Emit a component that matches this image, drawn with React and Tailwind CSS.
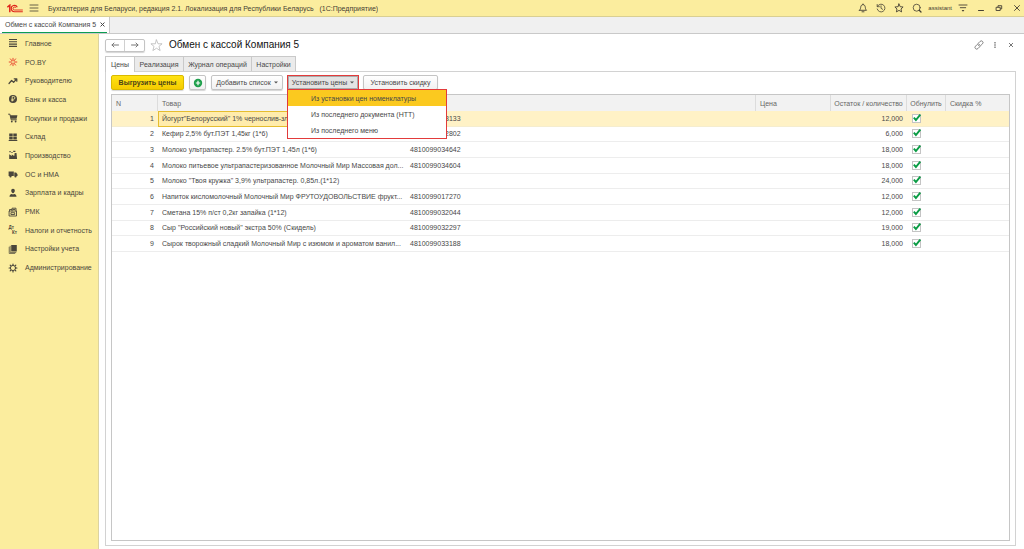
import React, { useState } from "react";

const line = { fill: "none", stroke: "currentColor", strokeWidth: 1, strokeLinecap: "round", strokeLinejoin: "round" };

function Icon({ children, className = "size-[10px]", box = "0 0 10 10" }) {
  return (
    <svg viewBox={box} className={`shrink-0 ${className}`} aria-hidden="true">
      {children}
    </svg>
  );
}

const sections = [
  ["Главное", <path d="M1 1.5h8M1 3.8h8M1 6.1h8M1 8.4h8" {...line} strokeWidth="1.1" strokeLinecap="butt" />],
  ["РО.BY", (
    <g stroke="#e8472e" fill="#e8472e" strokeWidth="1" strokeLinecap="round">
      <path d="M5 1.300v2.300M5 6.400v2.300M1.200 5h2.400M6.400 5h2.400M2.400 1.900l1.700 2M5.900 6.100l1.700 2M7.600 1.900L5.900 3.900M4.100 6.100L2.400 8.100" />
    </g>
  )],
  ["Руководителю", <path d="M1 7.5l2.6-3 2 1.8L8.6 3M6.2 2.8h2.6v2.4" {...line} strokeWidth="1.2" />],
  ["Банк и касса", (
    <g>
      <circle cx="5" cy="5" r="4" fill="currentColor" />
      <path d="M4.2 7.5v-5h1.3a1.4 1.4 0 0 1 0 2.8H3.4M3.4 6.4h2.2" fill="none" stroke="#fbed9e" strokeWidth="0.8" />
    </g>
  )],
  ["Покупки и продажи", (
    <g>
      <path d="M2.2 2.2H9.4L8.6 5.8H3.2z" fill="currentColor" />
      <path d="M.6 1.2h1.3l1.3 5.6h5.2" {...line} />
      <circle cx="3.8" cy="8.5" r=".9" fill="currentColor" />
      <circle cx="7.6" cy="8.5" r=".9" fill="currentColor" />
    </g>
  )],
  ["Склад", <path d="M1.2 1.5h3.5v3H1.2zM5.3 1.5h3.5v3H5.3zM1.2 5h3.5v2.5H1.2zM5.3 5h3.5v2.5H5.3zM.7 8h8.6v.9H.7z" fill="currentColor" />],
  ["Производство", <path d="M1.2 9V4.2L3.8 6V4.6L6.2 6l.5-3h1.8l.6 6zM1.4 1h1.3v1.3H1.4zM3.4 2h1.2v1.1H3.4zM5.2.8h2.2v1.2H5.2z" fill="currentColor" />],
  ["ОС и НМА", (
    <g fill="currentColor">
      <path d="M.6 2.5h5.2v4.6H.6zM6.3 3.4h1.8l1.4 1.8v1.9H6.3z" />
      <circle cx="2.5" cy="7.5" r="1.1" />
      <circle cx="7.5" cy="7.5" r="1.1" />
    </g>
  )],
  ["Зарплата и кадры", (
    <g fill="currentColor">
      <path d="M5 .8c1.2 0 1.8.9 1.8 2S6 5.2 5 5.2 3.2 3.900 3.200 2.800 3.800.8 5 .8z" />
      <path d="M1.500 8.800c0-1.900.7-2.500 2.300-2.900L5 6.500l1.200-.6c1.600.4 2.300 1 2.300 2.900z" />
    </g>
  )],
  ["РМК", (
    <g {...line} strokeWidth="0.9">
      <path d="M1.500 4h7v5h-7zM4 4V1.200h4V4M1.500 4V2.500H4M3.300 5.700h3.400v1.800H3.300z" />
      <path d="M5.200 2.500h1.700" />
    </g>
  )],
  ["Налоги и отчетность", (
    <g fill="currentColor" fontFamily="Liberation Sans, sans-serif" fontWeight="700" fontSize="4.500">
      <text x="0.500" y="4">Дт</text>
      <text x="4" y="9">Кт</text>
    </g>
  )],
  ["Настройки учета", (
    <g>
      <path d="M3.200 1h5.600v6.500H3.200z" fill="currentColor" />
      <path d="M2.200 2.200v6.300h5.600M1.200 3.200v6.300h5.600" {...line} strokeWidth="0.700" />
    </g>
  )],
  ["Администрирование", (
    <g {...line}>
      <circle cx="5" cy="5" r="2.600" />
      <path d="M5 1.100v.7M5 8.200v.7M1.100 5h.7M8.200 5h.7M2.200 2.200l.5.5M7.300 7.300l.5.5M7.800 2.200l-.5.5M2.700 7.300l-.5.5" strokeWidth="1.200" />
    </g>
  )],
];

const products = [
  ['Йогурт"Белорусский" 1% чернослив-зл...', "4810099003133", "12,000"],
  ["Кефир 2,5% бут.ПЭТ 1,45кг (1*6)", "4810099002802", "6,000"],
  ["Молоко ультрапастер. 2.5% бут.ПЭТ 1,45л (1*6)", "4810099034642", "18,000"],
  ["Молоко питьевое ультрапастеризованное Молочный Мир Массовая дол...", "4810099034604", "18,000"],
  ['Молоко "Твоя кружка" 3,9% ультрапастер. 0,85л.(1*12)', "", "24,000"],
  ["Напиток кисломолочный Молочный Мир ФРУТОУДОВОЛЬСТВИЕ фрукт...", "4810099017270", "12,000"],
  ["Сметана 15% п/ст 0,2кг запайка (1*12)", "4810099032044", "12,000"],
  ['Сыр "Российский новый" экстра 50% (Скидель)', "4810099032297", "19,000"],
  ["Сырок творожный сладкий Молочный Мир с изюмом и ароматом ванил...", "4810099033188", "18,000"],
];

const menuItems = ["Из установки цен номенклатуры", "Из последнего документа (НТТ)", "Из последнего меню"];

const button = "flex h-[15px] items-center justify-center rounded-[2px] border border-[#c4c4c4] bg-linear-to-b from-white to-[#f1f1f1] shadow-[0_1px_1px_#d5d5d5]";

function Caret() {
  return <Icon className="h-[3px] w-[4px]" box="0 0 4 3"><path d="M0 .5h4L2 2.500z" fill="#555" /></Icon>;
}

function ZeroBox({ label }) {
  const [on, setOn] = useState(true);
  return (
    <label className="relative block size-[9px]">
      <input type="checkbox" aria-label={label} checked={on} onChange={() => setOn(!on)} className="block size-[9px] appearance-none border border-[#c4c4c4] bg-white" />
      {on && (
        <svg viewBox="0 0 9 9" className="pointer-events-none absolute inset-0 size-[9px] overflow-visible" aria-hidden="true">
          <path d="M1.800 3.600L3.900 6 8.300.6" fill="none" stroke="#0a9c45" strokeWidth="1.900" />
        </svg>
      )}
    </label>
  );
}

function TitleBar() {
  const tool = "flex size-[10px] items-center justify-center";
  return (
    <header className="flex h-[17px] items-center border-b border-[#d9cf93] bg-[#fbed9e] pr-[2px] pl-[7px] text-[#454034]">
      <svg viewBox="0 0 16 9" className="h-[9px] w-[16px]" role="img" aria-label="1С">
        <g fill="none" stroke="#e0261c">
          <path d="M.3 3.200L2.800 1.200V8.200" strokeWidth="1.500" />
          <path d="M10.300 3.200A3.200 3.200 0 1 0 7.600 7.800H15.800" strokeWidth="1.100" />
          <path d="M8.800 3.700A1.500 1.500 0 1 0 7.600 6H15.800" strokeWidth="0.900" />
        </g>
      </svg>
      <button aria-label="Меню" className="ml-[6px] flex size-[10px] items-center justify-center">
        <Icon><path d="M1 2h8M1 5h8M1 8h8" {...line} strokeWidth="0.800" /></Icon>
      </button>
      <p className="ml-[9px] truncate text-[7px] whitespace-pre">
        {"Бухгалтерия для Беларуси, редакция 2.1. Локализация для Республики Беларусь   (1С:Предприятие)"}
      </p>
      <div className="ml-auto flex items-center gap-[8px]">
        <button aria-label="Уведомления" className={tool}><Icon><path d="M1.500 7.300h7C7.300 6.200 7.500 5 7.200 3.700 7 2.500 6.200 1.800 5 1.600 3.800 1.800 3 2.500 2.800 3.700 2.500 5 2.700 6.200 1.500 7.300zM5 1v.6M4 8.800h2" {...line} strokeWidth="0.900" /></Icon></button>
        <button aria-label="История" className={tool}><Icon><path d="M1.500 3.300A3.900 3.900 0 1 1 1.200 6M1.200 1.500v2.200h2.200M5 2.800v2.500l1.600 1" {...line} strokeWidth="0.800" /></Icon></button>
        <button aria-label="Избранное" className={tool}><Icon><path d="M5 1l1.200 2.700 2.900.3L7 6l.6 2.900L5 7.400 2.400 8.900 3 6 .9 4l2.900-.3z" {...line} strokeWidth="0.900" /></Icon></button>
        <button aria-label="Поиск" className={tool}><Icon><circle cx="4.700" cy="4.700" r="3.500" {...line} strokeWidth="0.800" /><path d="M7.200 7.200L9 9" {...line} strokeWidth="1.300" /></Icon></button>
      </div>
      <span className="ml-[6px] text-[6px]">assistant</span>
      <div className="ml-[6px] flex items-center gap-[8px]">
        <button aria-label="Настройки" className={tool}><Icon><path d="M1 2h8M2.300 4.700h5.400" {...line} strokeWidth="0.900" /><path d="M3.600 7h2.800L5 8.700z" fill="currentColor" /></Icon></button>
        <button aria-label="Свернуть" className={tool}><Icon><path d="M2.500 7.500h5" {...line} /></Icon></button>
        <button aria-label="Восстановить" className={tool}><Icon><path d="M2.500 4.300h3.700v3.200H2.500zM4 4V2.700h3.700v3.200H6.500" {...line} strokeWidth="0.900" /></Icon></button>
        <button aria-label="Закрыть" className={tool}><Icon><path d="M2.500 2.500l5 5M7.500 2.500l-5 5" {...line} strokeWidth="0.900" /></Icon></button>
      </div>
    </header>
  );
}

function Sidebar() {
  return (
    <nav className="w-[99px] shrink-0 border-r border-[#dcd3a0] bg-[#fbed9e]">
      <ul className="grid h-[243px] auto-rows-fr">
        {sections.map(([name, art]) => (
          <li key={name} className="flex">
            <a href="#" className="flex grow items-center gap-[7px] pl-[8px] whitespace-nowrap text-[#4a463b]">
              <Icon>{art}</Icon>
              {name}
            </a>
          </li>
        ))}
      </ul>
    </nav>
  );
}

function Toolbar() {
  const [open, setOpen] = useState(true);
  return (
    <div className="flex items-center">
      <button className="flex h-[15px] w-[73px] items-center justify-center rounded-[2px] border border-[#d9b900] bg-linear-to-b from-[#ffe312] to-[#f5cb00] font-bold text-[#4d4416] shadow-[0_1px_1px_#d5d5d5]">Выгрузить цены</button>
      <button aria-label="Добавить" className={`${button} ml-[5px] w-[17px]`}>
        <Icon><circle cx="5" cy="5" r="4.200" fill="#1fa04c" /><path d="M5 2.800v4.400M2.800 5h4.400" stroke="#fff" strokeWidth="1.200" /></Icon>
      </button>
      <button className={`${button} ml-[5px] w-[72px] gap-[3px]`}>Добавить список<Caret /></button>
      <div className="relative ml-[4px]">
        <div className="border border-[#e23b3b]">
          <button aria-expanded={open} onClick={() => setOpen(!open)} className="flex h-[13px] w-[70px] items-center justify-center gap-[3px] border border-[#aaa] bg-[#e3e3e3]">Установить цены<Caret /></button>
        </div>
        {open && (
          <ul className="absolute top-[14px] left-0 z-10 w-[160px] border border-[#e23b3b] bg-white">
            {menuItems.map((item, i) => (
              <li key={item}>
                <button className={`flex h-4 w-full items-center pl-[23px] whitespace-nowrap ${i === 0 ? "bg-[#fbc91f]" : "bg-white"}`}>{item}</button>
              </li>
            ))}
          </ul>
        )}
      </div>
      <button className={`${button} ml-[4px] w-[75px]`}>Установить скидку</button>
    </div>
  );
}

function PriceTable() {
  const head = "border-r border-[#dcdcdc] px-[4px] text-left font-normal";
  return (
    <div className="mt-[4px] grow border border-[#c6c6c6]">
      <table className="h-[157px] w-full table-fixed border-separate border-spacing-0">
        <colgroup>
          <col className="w-[46px]" />
          <col className="w-[247px]" />
          <col />
          <col className="w-[75px]" />
          <col className="w-[76px]" />
          <col className="w-[39px]" />
          <col className="w-[63px]" />
        </colgroup>
        <thead className="bg-[#f2f2f2] text-[#666]">
          <tr className="h-[16px]">
            <th className={head}>N</th>
            <th className="px-[4px] text-left font-normal">Товар</th>
            <th className="border-r border-[#dcdcdc]" aria-label="Штрихкод" />
            <th className={head}>Цена</th>
            <th className="border-r border-[#dcdcdc] text-center font-normal whitespace-nowrap">Остаток / количество</th>
            <th className="border-r border-[#dcdcdc] text-center font-normal">Обнулить</th>
            <th className="px-[4px] text-left font-normal">Скидка %</th>
          </tr>
        </thead>
        <tbody>
          {products.map(([name, code, qty], i) => {
            const cell = i === 0 ? "border-b border-[#f5edcf] bg-[#fff2c6]" : "border-b border-[#ededed]";
            return (
              <tr key={name}>
                <td className={`${cell} pr-[4px] text-right`}>{i + 1}</td>
                <td className={`px-[4px] whitespace-nowrap ${i === 0 ? "border-b border-[#e5bd2e] bg-[#ffecac] shadow-[inset_1px_1px_#e5bd2e]" : cell}`}>{name}</td>
                <td className={`${cell} pl-[5px]`}>{code}</td>
                <td className={cell} />
                <td className={`${cell} pr-[4px] text-right`}>{qty}</td>
                <td className={`${cell} pl-[5px]`}><ZeroBox label={`Обнулить: ${name}`} /></td>
                <td className={cell} />
              </tr>
            );
          })}
        </tbody>
      </table>
    </div>
  );
}

export default function App() {
  const tabs = [["Цены", "w-[30px]"], ["Реализация", "w-[49px]"], ["Журнал операций", "w-[68px]"], ["Настройки", "w-[44px]"]];
  return (
    <div className="flex min-h-screen flex-col bg-white font-['Liberation_Sans',Arial,sans-serif] text-[7px] leading-[9px] text-[#484848]">
      <TitleBar />
      <div className="flex h-[17px] border-b border-[#c9c9c9] bg-[#f0f0f0]">
        <div className="flex items-center gap-[4px] border-r border-[#c9c9c9] bg-white px-[2px]">
          <div className="flex h-full items-center gap-[4px] border-b border-[#0c9d52] pr-[2px] pl-[3px]">
            <a href="#" className="whitespace-nowrap">Обмен с кассой Компания 5</a>
            <button aria-label="Закрыть вкладку"><Icon className="size-[5px]" box="0 0 5 5"><path d="M.8.8l3.400 3.400M4.200.8L.8 4.200" {...line} /></Icon></button>
          </div>
        </div>
      </div>
      <div className="flex grow">
        <Sidebar />
        <main className="flex min-w-0 grow flex-col pt-[4px] pr-[8px] pb-[3px] pl-[6px]">
          <div className="flex h-[14px] items-center">
            <div className="flex h-[13px] rounded-[2px] border border-[#c4c4c4] text-[#777] shadow-[0_1px_1px_#d5d5d5]">
              <button aria-label="Назад" className="flex w-[19px] items-center justify-center border-r border-[#d0d0d0]"><Icon className="size-[8px]" box="0 0 8 8"><path d="M7.500 4H1M3 2L1 4l2 2" {...line} /></Icon></button>
              <button aria-label="Вперёд" className="flex w-[19px] items-center justify-center"><Icon className="size-[8px]" box="0 0 8 8"><path d="M.5 4H7M5 2l2 2-2 2" {...line} /></Icon></button>
            </div>
            <button aria-label="В избранное" className="ml-[5px] text-[#b5b5b5]"><Icon className="size-[13px]"><path d="M5 .7l1.200 3H9.300L6.900 5.700l.9 3.200L5 7.100 2.200 8.900l.9-3.200L.7 3.700h3.100z" {...line} strokeWidth="0.600" /></Icon></button>
            <h1 className="ml-[6px] text-[10px] leading-[14px] text-[#111]">Обмен с кассой Компания 5</h1>
            <div className="ml-auto flex items-center gap-[6px] text-[#666]">
              <button aria-label="Ссылка"><Icon><path d="M4.300 3.200l1.800-1.800a1.600 1.600 0 0 1 2.400 2.400L6.700 5.600a1.600 1.600 0 0 1-2.200 0M5.700 6.800L3.900 8.600a1.600 1.600 0 0 1-2.400-2.400l1.800-1.800a1.600 1.600 0 0 1 2.200 0" {...line} strokeWidth="0.800" /></Icon></button>
              <button aria-label="Ещё"><Icon><g fill="currentColor"><path d="M4.400 2h1.200v1.400H4.400zM4.400 4.300h1.200v1.400H4.400zM4.400 6.600h1.200V8H4.400z" /></g></Icon></button>
              <button aria-label="Закрыть форму"><Icon><path d="M3.300 3.300l3.400 3.400M6.700 3.300L3.300 6.700" {...line} strokeWidth="0.900" /></Icon></button>
            </div>
          </div>
          <div role="tablist" className="mt-[4px] flex h-[15px]">
            {tabs.map(([name, width], i) => (
              <button key={name} role="tab" aria-selected={i === 0} className={`${width} border-t border-r border-[#c9c9c9] whitespace-nowrap ${i === 0 ? "z-1 -mb-px border-l bg-white" : "bg-[#ebebeb]"}`}>{name}</button>
            ))}
          </div>
          <section className="flex grow flex-col border border-[#d2d2d2] px-[5px] pt-[3px] pb-[4px]">
            <Toolbar />
            <PriceTable />
          </section>
        </main>
      </div>
    </div>
  );
}
